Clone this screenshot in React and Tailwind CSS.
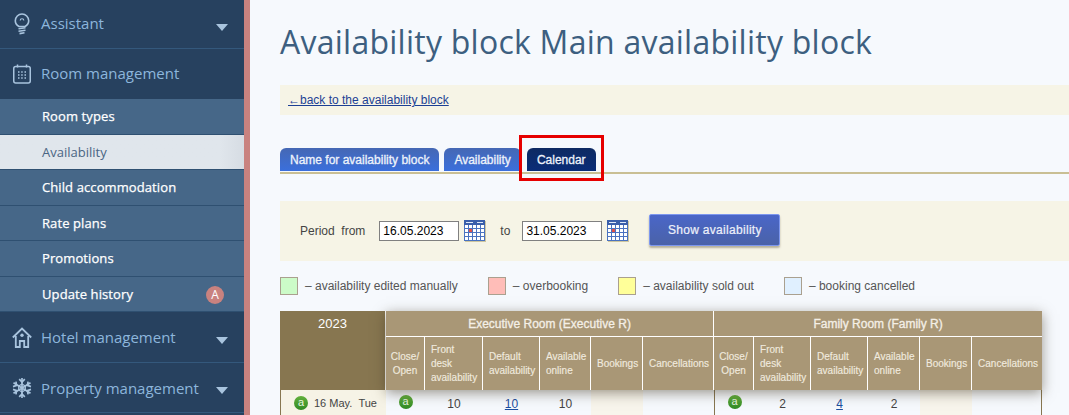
const subItems = [
  { label: "Room types", h: "h-[36px]" },
  { label: "Availability", h: "h-[35px] pt-[1px]", active: true },
  { label: "Child accommodation", h: "h-[36px] pt-[1px]" },
  { label: "Rate plans", h: "h-[35px] pt-[1px]" },
  { label: "Promotions", h: "h-[36px]" },
  { label: "Update history", h: "h-[35px] pt-[1px]", badge: "A" },
];

const subCols = ["Close/\nOpen", "Front\ndesk\navailability", "Default\navailability", "Available\nonline", "Bookings", "Cancellations"];

function Caret() {
  return <span className="mt-[6px] mr-[16px] ml-auto h-0 w-0 border-x-[6px] border-t-[7px] border-x-transparent border-t-[#a9c4de]" />;
}

function BulbIcon() {
  return (
    <svg viewBox="0 0 16 22" className="h-[22px] w-[16px]" fill="none" stroke="#a9c4de" strokeWidth="1.6">
      <path d="M5 13.5C3 12.3 1.3 10.4 1.3 7.7a6.7 6.7 0 0 1 13.4 0c0 2.7-1.7 4.6-3.7 5.8z" />
      <path d="M6.2 7.5a1.8 1.8 0 0 1 3.6 0" strokeWidth="1.1" />
      <path d="M4.5 15.7l7-1M4.5 18.2l7-1M5.5 20.6l5-.8" />
    </svg>
  );
}

function RoomIcon() {
  return (
    <svg viewBox="0 0 18 20" className="h-[20px] w-[18px]" fill="none" stroke="#a9c4de">
      <rect x="0.75" y="2.5" width="16.5" height="16.5" rx="2" strokeWidth="1.5" />
      <path d="M4.5 0.5v3M13.5 0.5v3" strokeWidth="1.5" />
      <path d="M5 8h1.5M8.2 8h1.5M11.5 8h1.5M5 11h1.5M8.2 11h1.5M11.5 11h1.5M5 14h1.5M8.2 14h1.5M11.5 14h1.5" strokeWidth="1.6" />
    </svg>
  );
}

function HouseIcon() {
  return (
    <svg viewBox="0 0 20 21" className="h-[21px] w-[20px]" fill="none" stroke="#a9c4de" strokeWidth="1.8">
      <path d="M0.8 10.5L10 1.6l9.2 8.9" />
      <path d="M3.8 9v11h4v-6h4.4v6h4V9" />
      <circle cx="10" cy="8.2" r="1.7" fill="#a9c4de" stroke="none" />
    </svg>
  );
}

function SnowIcon() {
  return (
    <svg viewBox="0 0 20 22" className="h-[22px] w-[20px]" fill="none" stroke="#a9c4de" strokeWidth="1.7">
      <path d="M10 1v20M1.5 5.8l17 10.4M18.5 5.8l-17 10.4" />
      <path d="M7.2 2.2L10 5l2.8-2.8M7.2 19.8L10 17l2.8 2.8M1 9.6L4.6 8.4 3.9 4.6M19 9.6l-3.6-1.2.7-3.8M1 12.4l3.6 1.2-.7 3.8M19 12.4l-3.6 1.2.7 3.8" />
      <path d="M10 7l3.3 2v4L10 15l-3.3-2V9z" strokeWidth="1.3" />
    </svg>
  );
}

function MenuRow({ icon, label, caret, className, labelClass = "" }) {
  return (
    <div className={`flex items-center border-b border-[#34587c] text-[#8db6dc] ${className}`}>
      <span className="flex w-[41px] justify-center pl-[3px]">{icon}</span>
      <span className={`text-[15px] ${labelClass}`}>{label}</span>
      {caret && <Caret />}
    </div>
  );
}

function Sidebar() {
  return (
    <aside className="flex h-[415px] w-[250px] shrink-0 flex-col overflow-hidden border-r-[6px] border-[#c9827f] bg-[#27415f] font-['Open_Sans',sans-serif]">
      <MenuRow icon={<BulbIcon />} label="Assistant" caret className="h-[49px] shrink-0" labelClass="pb-[2px]" />
      <div className="flex h-[50px] shrink-0 items-center text-[#8db6dc]">
        <span className="flex w-[41px] justify-center pl-[3px]"><RoomIcon /></span>
        <span className="pb-[2px] text-[15px]">Room management</span>
      </div>
      {subItems.map((it) => (
        <div
          key={it.label}
          className={`flex shrink-0 items-center border-b border-[#2f5071] pl-[42px] text-[13px] ${it.h} ${it.active ? "bg-gradient-to-r from-[#e0e6ec] from-90% to-[#d6dce3] text-[#4a6583]" : "bg-[#466788] tracking-[0.1px] text-white [-webkit-text-stroke:0.25px_white]"}`}
        >
          {it.label}
          {it.badge && (
            <span className="mr-[20px] ml-auto flex h-[18px] w-[18px] items-center justify-center rounded-full bg-[#c9827f] text-[12px] [-webkit-text-stroke:0]">
              {it.badge}
            </span>
          )}
        </div>
      ))}
      <MenuRow icon={<HouseIcon />} label="Hotel management" caret className="h-[51px] shrink-0" />
      <MenuRow icon={<SnowIcon />} label="Property management" caret className="h-[50px] shrink-0" labelClass="pt-[1px]" />
    </aside>
  );
}

function CalendarIcon() {
  return (
    <svg viewBox="0 0 22 22" className="ml-[5px] h-[22px] w-[22px] shrink-0">
      <rect x="1" y="1" width="21" height="21" fill="#cfc69f" />
      <rect x="0" y="0" width="21" height="21" fill="#4a72c0" />
      <rect x="0" y="0" width="21" height="5" fill="#3a5eaa" />
      <path d="M2 2.5h7M13 2.5h6" stroke="#dfe8f8" strokeWidth="1" />
      {[5, 9, 13, 17].map((y) =>
        [1, 5, 9, 13, 17].map((x) => (
          <rect key={`${x}-${y}`} x={x} y={y} width="3" height="3" fill={x === 5 && y === 9 ? "#e0504a" : "#fff"} />
        ))
      )}
    </svg>
  );
}

function TabButton({ children, dark }) {
  return (
    <span className={`flex h-[23px] items-center rounded-t-[6px] px-[10px] text-[12px] text-[#eef3fb] [-webkit-text-stroke:0.3px_#eef3fb] ${dark ? "ml-[1px] bg-gradient-to-b from-[#0e2a62] to-[#0a2c78]" : "bg-gradient-to-b from-[#4568b4] to-[#3a6fdc]"}`}>
      {children}
    </span>
  );
}

function Legend({ color, label, className }) {
  return (
    <span className={`flex items-center ${className}`}>
      <span className={`mr-[7px] h-[18px] w-[18px] border border-[#aaa08f] ${color}`} />
      – {label}
    </span>
  );
}

function Badge({ className }) {
  return (
    <span className={`inline-flex h-[14px] w-[14px] items-center justify-center rounded-full bg-gradient-to-b from-[#62b03c] to-[#2f8a24] pb-[2px] text-[11px] text-[#e8f5e0] ${className}`}>
      a
    </span>
  );
}

function CalendarTable() {
  const widths = [106, 39, 58, 57, 51, 52, 71, 40, 57, 57, 52, 52, 70];
  return (
    <div className="relative w-[762px]">
      <table className="w-[762px] table-fixed border-separate border-spacing-0 text-[#444]">
        <colgroup>
          {widths.map((w, i) => (
            <col key={i} style={{ width: w }} />
          ))}
        </colgroup>
        <thead>
          <tr className="h-[26px]">
            <th rowSpan={2} className="border-r border-white bg-[#877650] pb-[53px] text-[13px] font-normal text-white">2023</th>
            <th colSpan={6} className="border-r border-b border-white bg-[#a99776] text-[12px] font-normal text-[#f4efe6] [-webkit-text-stroke:0.3px_#f4efe6]">Executive Room (Executive R)</th>
            <th colSpan={6} className="border-b border-white bg-[#a99776] text-[12px] font-normal text-[#f4efe6] [-webkit-text-stroke:0.3px_#f4efe6]">Family Room (Family R)</th>
          </tr>
          <tr className="h-[53px]">
            {[...subCols, ...subCols].map((c, i) => (
              <th
                key={i}
                className={`bg-[#a99776] text-[10px] leading-[14px] font-normal whitespace-pre-line text-[#f0eadf] [-webkit-text-stroke:0.15px_#f0eadf] ${i === 0 || i === 6 ? "text-center" : "pl-[6px] text-left"} ${i !== 11 ? "border-r border-white" : ""}`}
              >
                {c}
              </th>
            ))}
          </tr>
        </thead>
        <tbody>
          <tr className="h-[26px] text-center text-[12px]">
            <td className="border-l border-[#877650] bg-[#f6f3e6] text-[11px] whitespace-nowrap">
              <div className="flex items-center pl-[13px]">
                <Badge className="mr-[6px]" />
                16 May.&nbsp;&nbsp;Tue
              </div>
            </td>
            <td><Badge className="mb-[5px]" /></td>
            <td className="pt-[1px]">10</td>
            <td className="pt-[1px]"><a href="#" className="text-[#1c4fa0] underline">10</a></td>
            <td className="pt-[1px]">10</td>
            <td className="bg-[#f8f5ec]" />
            <td />
            <td className="border-l border-[#877650]"><Badge className="mb-[5px]" /></td>
            <td className="pt-[1px]">2</td>
            <td className="pt-[1px]"><a href="#" className="text-[#1c4fa0] underline">4</a></td>
            <td className="pt-[1px]">2</td>
            <td className="bg-[#f8f5ec]" />
            <td className="border-r border-[#877650]" />
          </tr>
        </tbody>
      </table>
      {/* header shadow over the body rows, only draws outside its own box */}
      <div className="pointer-events-none absolute top-0 right-0 left-[106px] h-[79px] shadow-[0_3px_12px_rgba(60,50,30,0.5)]" />
    </div>
  );
}

export default function App() {
  return (
    <div className="flex h-[415px] w-[1069px] overflow-hidden bg-[#f6f9fd] font-['Liberation_Sans',Arial,sans-serif]">
      <Sidebar />
      <main className="min-w-0 flex-1 pl-[30px]">
        <h1 className="mt-[21px] font-['Open_Sans',sans-serif] text-[32px] leading-[42px] tracking-[0.25px] whitespace-nowrap text-[#3d5f80]">
          Availability block Main availability block
        </h1>
        <div className="mt-[22px] flex h-[30px] items-center bg-[#f6f4e6] pl-[8px] text-[12px] text-[#1c3f94] underline">
          ←back to the availability block
        </div>
        <div className="relative mt-[33px] flex h-[26px] gap-[5px] border-b-[2px] border-[#c9bf94]">
          <TabButton>Name for availability block</TabButton>
          <TabButton>Availability</TabButton>
          <TabButton dark>Calendar</TabButton>
          <span className="absolute top-[-13px] left-[239px] h-[46px] w-[85px] border-[3px] border-[#e60000]" />
        </div>
        <div className="mt-[27px] flex h-[60px] items-center bg-[#f6f4e6] pl-[20px] text-[12px] text-[#444]">
          <span className="mr-[14px] whitespace-pre">Period  from</span>
          <span className="flex h-[20px] w-[80px] items-center border border-[#808080] bg-white pl-[3px] text-black">16.05.2023</span>
          <CalendarIcon />
          <span className="mr-[12px] ml-[14px]">to</span>
          <span className="flex h-[20px] w-[80px] items-center border border-[#808080] bg-white pl-[3px] text-black">31.05.2023</span>
          <CalendarIcon />
          <span className="mb-[2px] ml-[20px] flex h-[32px] w-[131px] items-center justify-center rounded-[2px] border border-[#7d97ee] bg-gradient-to-b from-[#4a66c8] to-[#4a62a8] text-[12px] tracking-[0.3px] text-[#eef1fa] shadow-[0_2px_2px_rgba(120,110,80,0.5)] [-webkit-text-stroke:0.2px_#eef1fa]">
            Show availability
          </span>
        </div>
        <div className="mt-[15px] flex h-[19px] items-center text-[12px] text-[#555]">
          <Legend color="bg-[#ccfbc8]" label="availability edited manually" className="mr-[30px]" />
          <Legend color="bg-[#ffbdb8]" label="overbooking" className="mr-[30px]" />
          <Legend color="bg-[#ffff99]" label="availability sold out" className="mr-[30px]" />
          <Legend color="bg-[#e0f0ff]" label="booking cancelled" />
        </div>
        <div className="mt-[16px]">
          <CalendarTable />
        </div>
      </main>
    </div>
  );
}
